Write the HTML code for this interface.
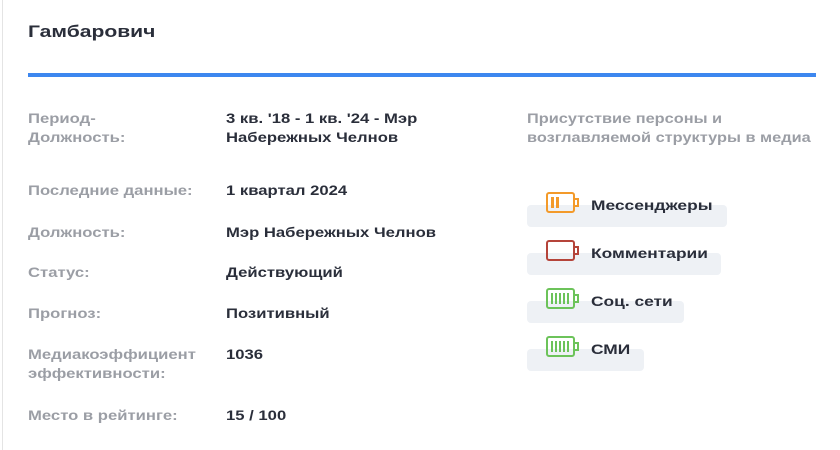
<!DOCTYPE html><html><head><meta charset="utf-8"><style>
body{margin:0;width:840px;height:450px;background:#fff;font-family:"Liberation Sans",sans-serif;overflow:hidden;position:relative}
.b{position:absolute;font-weight:bold;font-size:14px;line-height:19px;white-space:nowrap;transform:scaleX(1.19);transform-origin:0 0}
.l{color:#9b9ea5}.v{color:#2a2e3a}
.bar{position:absolute;left:527px;height:22px;background:#eef1f5;border-radius:4px}
svg{position:absolute}
</style></head><body>
<div style="position:absolute;left:2px;top:0;width:1px;height:450px;background:#e4e4e4"></div>
<div class="b v" style="left:28px;top:21px;font-size:17px;line-height:22px;transform:scaleX(1.24)">Гамбарович</div>
<div style="position:absolute;left:28px;top:73px;width:788px;height:4px;background:#3d87ef"></div>
<div class="b l" style="left:28px;top:109px">Период-<br>Должность:</div>
<div class="b v" style="left:226px;top:109px">3 кв. '18 - 1 кв. '24 - Мэр<br>Набережных Челнов</div>
<div class="b l" style="left:28px;top:181px">Последние данные:</div>
<div class="b v" style="left:226px;top:181px">1 квартал 2024</div>
<div class="b l" style="left:28px;top:223px">Должность:</div>
<div class="b v" style="left:226px;top:223px">Мэр Набережных Челнов</div>
<div class="b l" style="left:28px;top:263px">Статус:</div>
<div class="b v" style="left:226px;top:263px">Действующий</div>
<div class="b l" style="left:28px;top:304px">Прогноз:</div>
<div class="b v" style="left:226px;top:304px">Позитивный</div>
<div class="b l" style="left:28px;top:345px">Медиакоэффициент<br>эффективности:</div>
<div class="b v" style="left:226px;top:345px">1036</div>
<div class="b l" style="left:28px;top:406px">Место в рейтинге:</div>
<div class="b v" style="left:226px;top:406px">15 / 100</div>
<div class="b l" style="left:527px;top:109px;font-size:13.5px;transform:scaleX(1.21)">Присутствие персоны и<br>возглавляемой структуры в медиа</div>
<div class="bar" style="top:205px;width:200px"></div>
<div class="bar" style="top:253px;width:194px"></div>
<div class="bar" style="top:301px;width:157px"></div>
<div class="bar" style="top:349px;width:117px"></div>
<svg style="left:546px;top:192px" width="34" height="22"><rect x="1" y="1" width="27" height="19" rx="2" fill="none" stroke="#f39a2a" stroke-width="2"/><rect x="28" y="7" width="4" height="7" fill="none" stroke="#f39a2a" stroke-width="2"/><rect x="5" y="5" width="3" height="11" fill="#f39a2a"/><rect x="10" y="5" width="3" height="11" fill="#f39a2a"/></svg>
<div class="b v" style="left:591px;top:196px;transform:scaleX(1.24)">Мессенджеры</div>
<svg style="left:546px;top:240px" width="34" height="22"><rect x="1" y="1" width="27" height="19" rx="2" fill="none" stroke="#b5443a" stroke-width="2"/><rect x="28" y="7" width="4" height="7" fill="none" stroke="#b5443a" stroke-width="2"/></svg>
<div class="b v" style="left:591px;top:244px;transform:scaleX(1.24)">Комментарии</div>
<svg style="left:546px;top:288px" width="34" height="22"><rect x="1" y="1" width="27" height="19" rx="2" fill="none" stroke="#6cc35a" stroke-width="2"/><rect x="28" y="7" width="4" height="7" fill="none" stroke="#6cc35a" stroke-width="2"/><g fill="#6cc35a"><rect x="5" y="5" width="2" height="11"/><rect x="9" y="5" width="2" height="11"/><rect x="13" y="5" width="2" height="11"/><rect x="17" y="5" width="2" height="11"/><rect x="21" y="5" width="2" height="11"/></g></svg>
<div class="b v" style="left:591px;top:292px;transform:scaleX(1.24)">Соц. сети</div>
<svg style="left:546px;top:336px" width="34" height="22"><rect x="1" y="1" width="27" height="19" rx="2" fill="none" stroke="#6cc35a" stroke-width="2"/><rect x="28" y="7" width="4" height="7" fill="none" stroke="#6cc35a" stroke-width="2"/><g fill="#6cc35a"><rect x="5" y="5" width="2" height="11"/><rect x="9" y="5" width="2" height="11"/><rect x="13" y="5" width="2" height="11"/><rect x="17" y="5" width="2" height="11"/><rect x="21" y="5" width="2" height="11"/></g></svg>
<div class="b v" style="left:591px;top:340px;transform:scaleX(1.24)">СМИ</div>
</body></html>
